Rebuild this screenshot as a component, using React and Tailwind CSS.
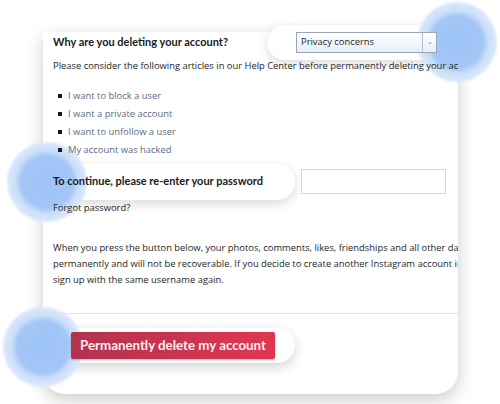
import React from "react";

function Halo({ className }) {
  return (
    <div
      className={
        "pointer-events-none absolute z-[1] rounded-full blur-[1px] bg-[radial-gradient(circle,#9ec3f6_0%,#a3c6f6_46%,#cbdff9_56%,#dfebfc_74%,rgba(232,241,253,0.6)_90%,rgba(232,241,253,0)_100%)] " +
        className
      }
    />
  );
}

export default function App() {
  const body = "font-['Open_Sans',sans-serif] text-[9.4px] text-[#262626]";
  const bold = "font-['Lato',sans-serif] font-bold text-[11px] text-[#1a1a1a]";
  const link = "text-[#5d6b80]";
  return (
    <div className="relative h-[404px] w-[500px] overflow-hidden bg-white">
      <div className="relative -mt-[20px] ml-[43px] w-[415px] rounded-b-[22px] bg-white pb-[35px] pl-[10px] shadow-[0_6px_18px_rgba(0,0,0,0.2)]">
        {/* heading row */}
        <div className="relative mt-[52px] flex h-[21px] items-center">
          <div className={"relative z-[2] " + bold}>Why are you deleting your account?</div>
          <div className="absolute left-[214px] top-[-7px] h-[35px] w-[215px] rounded-full bg-white shadow-[0_3px_10px_rgba(0,0,0,0.15)]" />
          <div className="relative z-[2] ml-[68px] flex h-[21px] w-[141px] items-center border border-[#9aa6b6] bg-gradient-to-b from-[#ffffff] to-[#e6eef9]">
            <span className={"flex-1 pl-[4px] " + body}>Privacy concerns</span>
            <span className="flex h-full w-[14px] items-center justify-center border-l border-[#b6c0cc] text-[7px] text-[#6a7a90]">⌄</span>
          </div>
        </div>
        <div className={"relative z-[2] mt-[5px] overflow-hidden whitespace-nowrap leading-[16px] " + body}>
          Please consider the following articles in our Help Center before permanently deleting your account.
        </div>
        <ul className={"relative z-[2] mt-[14px] flex flex-col gap-[2px] pl-[5px] " + body}>
          {["I want to block a user", "I want a private account", "I want to unfollow a user", "My account was hacked"].map((t) => (
            <li key={t} className="flex h-[16px] items-center gap-[6px]">
              <span className="h-[4px] w-[4px] bg-[#1a1a1a]" />
              <span className={link}>{t}</span>
            </li>
          ))}
        </ul>
        {/* password row */}
        <div className="relative mt-[11px] flex h-[25px] items-center">
          <div className="absolute left-[-28px] top-[-5px] h-[36px] w-[270px] rounded-full bg-white shadow-[0_4px_12px_rgba(0,0,0,0.15)]" />
          <div className={"relative z-[2] " + bold}>To continue, please re-enter your password</div>
          <div className="relative z-[2] ml-auto mr-[12px] h-[25px] w-[145px] border border-[#d6d6d6] bg-white" />
        </div>
        <div className={"relative z-[2] mt-[6px] leading-[16px] " + body + " " + link}>Forgot password?</div>
        <div className={"relative z-[2] mt-[24px] overflow-hidden whitespace-nowrap leading-[16px] " + body}>
          <div>When you press the button below, your photos, comments, likes, friendships and all other data will be removed</div>
          <div>permanently and will not be recoverable. If you decide to create another Instagram account in the future, you cannot</div>
          <div>sign up with the same username again.</div>
        </div>
        <div className="-ml-[10px] mt-[25px] h-px bg-[#e4e4e4]" />
        {/* button row */}
        <div className="relative mt-[18px] flex h-[27px] items-center">
          <div className="absolute left-[-23px] top-[-4px] h-[35px] w-[265px] rounded-full bg-white shadow-[0_4px_12px_rgba(0,0,0,0.18)]" />
          <button className="relative z-[2] ml-[18px] h-[27px] w-[204px] rounded-[2px] bg-gradient-to-r from-[#b3324f] to-[#e1364f] font-['Lato',sans-serif] text-[13.3px] font-bold text-[#fbeef1] shadow-[0_1px_2px_rgba(0,0,0,0.25)]">
            Permanently delete my account
          </button>
        </div>
      </div>
      <Halo className="left-[417px] top-[2px] h-[80px] w-[80px]" />
      <Halo className="left-[7px] top-[142px] h-[80px] w-[80px]" />
      <Halo className="left-[3px] top-[307px] h-[80px] w-[80px]" />
    </div>
  );
}
